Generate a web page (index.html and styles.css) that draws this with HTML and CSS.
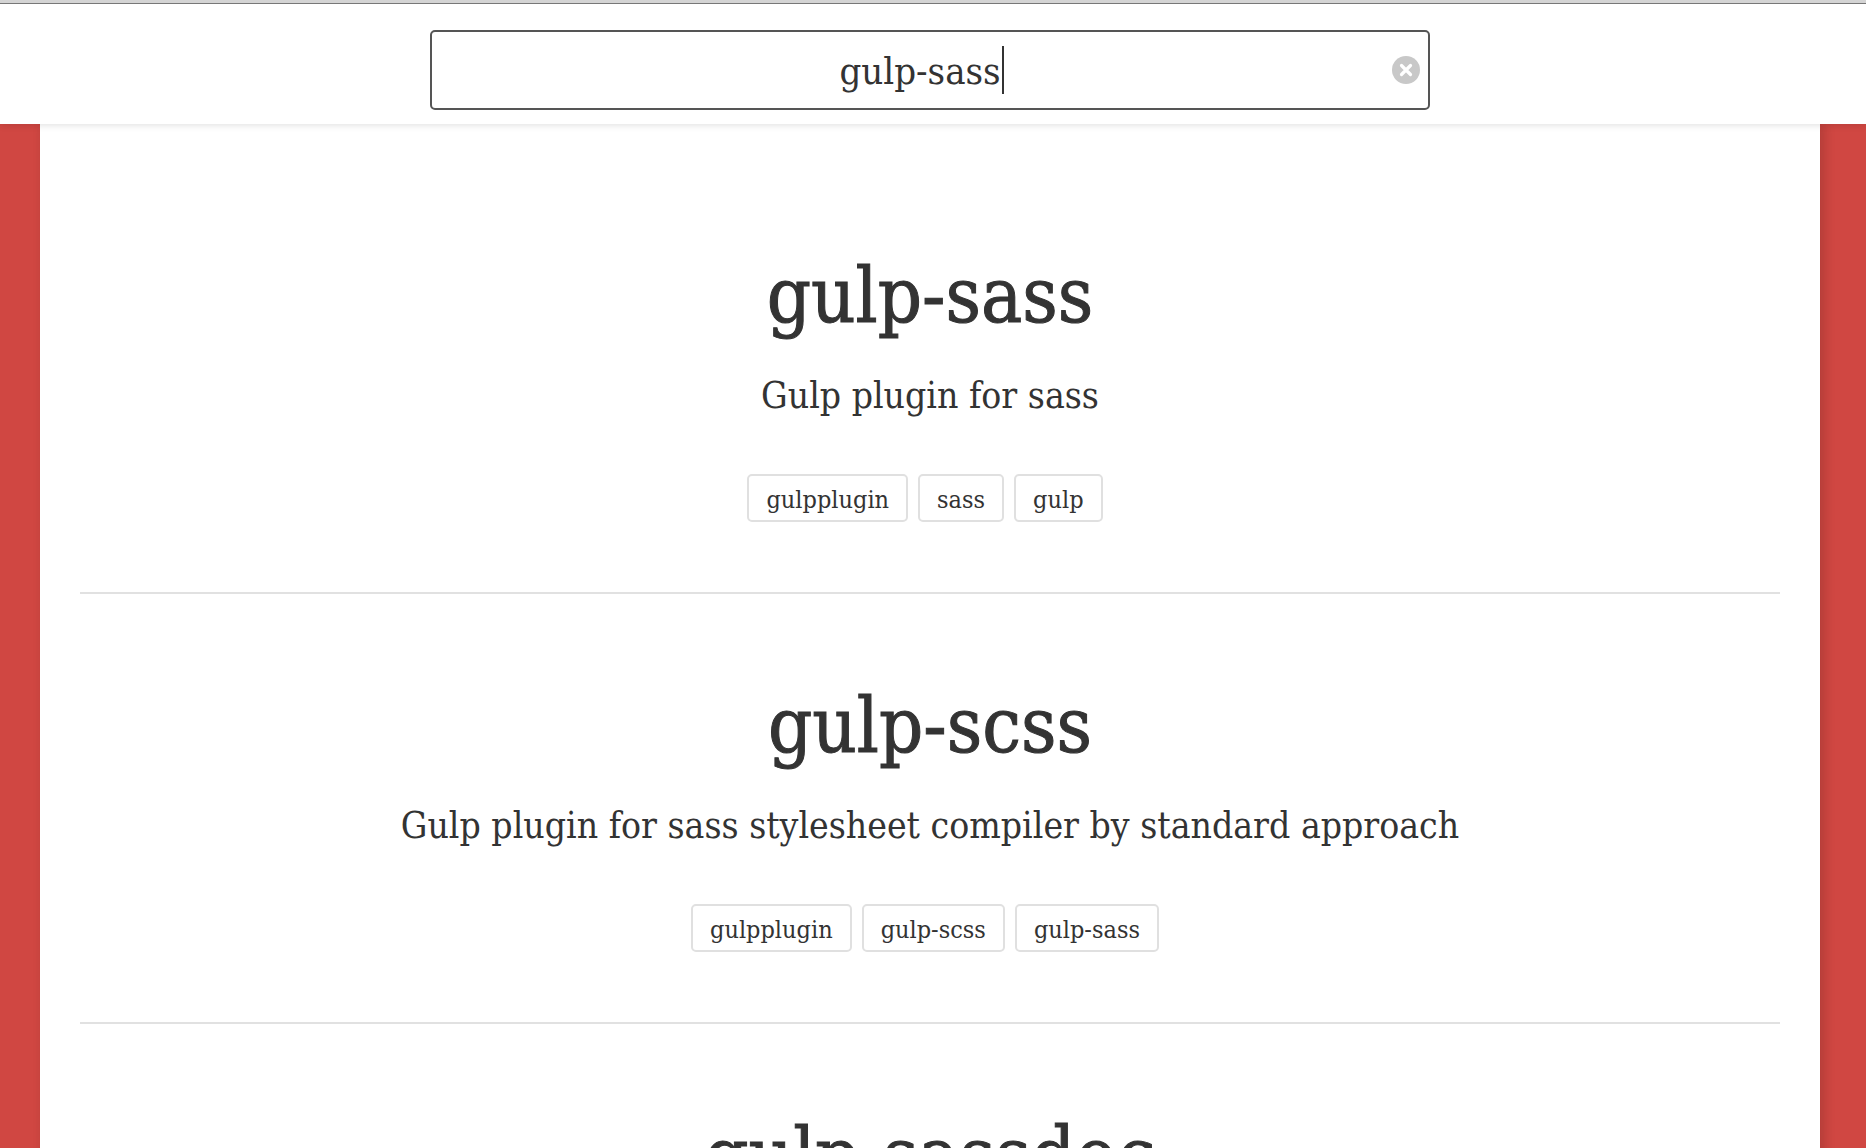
FILE: index.html
```html
<!DOCTYPE html>
<html lang="en">
<head>
<meta charset="utf-8">
<title>gulp plugin search</title>
<link rel="stylesheet" href="styles.css">
</head>
<body>
<header class="header">
  <form class="search" role="search">
    <input class="search-input" type="text" aria-label="Search plugins" value="gulp-sass">
    <span class="caret"></span>
    <button class="clear" type="reset" aria-label="Clear search">
      <svg viewBox="0 0 28 28" width="28" height="28" aria-hidden="true"><circle cx="14" cy="14" r="14" fill="#c8c8c8"/><path d="M9.5 9.5l9 9M18.5 9.5l-9 9" stroke="#fff" stroke-width="3.2" stroke-linecap="round"/></svg>
    </button>
  </form>
</header>
<main class="results">
  <article class="plugin">
    <h2 class="title">gulp-sass</h2>
    <p class="description">Gulp plugin for sass</p>
    <ul class="tags">
      <li class="tag">gulpplugin</li>
      <li class="tag">sass</li>
      <li class="tag">gulp</li>
    </ul>
  </article>
  <article class="plugin">
    <h2 class="title">gulp-scss</h2>
    <p class="description">Gulp plugin for sass stylesheet compiler by standard approach</p>
    <ul class="tags">
      <li class="tag">gulpplugin</li>
      <li class="tag">gulp-scss</li>
      <li class="tag">gulp-sass</li>
    </ul>
  </article>
  <article class="plugin">
    <h2 class="title">gulp-sassdoc</h2>
  </article>
</main>
</body>
</html>
```
FILE: styles.css
```css
* { box-sizing: border-box; }

body {
  margin: 0;
  height: 100vh;
  overflow: hidden;
  display: flex;
  flex-direction: column;
  background: #d04742;
  color: #333;
  font-family: "Roboto Slab", "DejaVu Serif Condensed", "DejaVu Serif", serif;
}

.header {
  position: relative;
  z-index: 1;
  flex: none;
  padding: 26px 46px 14px 40px;
  border-top: 4px solid #777;
  background: #fff;
  box-shadow: 0 0 8px rgba(0, 0, 0, 0.16);
}

.header::before {
  content: "";
  position: absolute;
  inset: -4px 0 auto;
  height: 3px;
  background: #d4d4d4;
}

.search {
  position: relative;
  max-width: 1000px;
  margin: 0 auto;
}

.search-input {
  display: block;
  width: 100%;
  height: 80px;
  padding: 2px 28px 0 8px;
  border: 2px solid #555;
  border-radius: 5px;
  outline: 0;
  background: #fff;
  color: inherit;
  font: 38px/48px "Roboto Slab", "DejaVu Serif Condensed", "DejaVu Serif", serif;
  text-align: center;
}

.caret {
  position: absolute;
  top: 16px;
  left: calc(50% + 72px);
  width: 2px;
  height: 48px;
  background: #333;
}

.clear {
  position: absolute;
  top: 26px;
  right: 10px;
  padding: 0;
  border: 0;
  background: none;
}

.clear svg { display: block; }

.results {
  flex: 1 0 auto;
  margin: 0 46px 0 40px;
  padding: 40px 40px 0;
  background: #fff;
  box-shadow: 8px 0 8px rgba(0, 0, 0, 0.08), 0 0 8px rgba(0, 0, 0, 0.08);
}

.plugin {
  display: flex;
  flex-direction: column;
  align-items: center;
  padding: 82px 0 70px;
  border-bottom: 2px solid #e1e1e1;
  text-align: center;
}

.title {
  margin: 0 0 20px;
  font-size: 77px;
  line-height: 100px;
  font-weight: 400;
  -webkit-text-stroke: 1px #333;
}

.description {
  margin: 0 0 48px;
  font-size: 37px;
  line-height: 60px;
  font-weight: 300;
}

.tags {
  display: flex;
  margin: 0;
  padding: 0;
  list-style: none;
}

.tag {
  height: 48px;
  margin-right: 10px;
  padding: 2px 17px 0;
  border: 2px solid #e0e0e0;
  border-radius: 5px;
  font-size: 25px;
  line-height: 44px;
}
```
